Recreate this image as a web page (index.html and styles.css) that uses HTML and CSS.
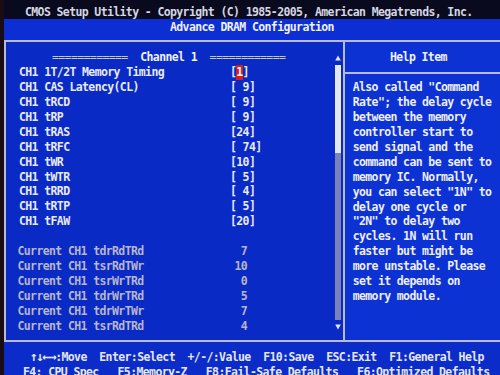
FILE: index.html
```html
<!DOCTYPE html>
<html>
<head>
<meta charset="utf-8">
<link rel="stylesheet" href="styles.css">
</head>
<body>
<div class="screen">
  <div class="titlebar">CMOS Setup Utility - Copyright (C) 1985-2005, American Megatrends, Inc.</div>
  <div class="subtitle">Advance DRAM Configuration</div>
  <div class="hline"></div>
  <div class="main">
    <div class="left">
      <div class="content">
        <div class="channel"><span class="eq">============</span>  Channel 1  <span class="eq">============</span></div>
        <div class="item"><span>CH1 1T/2T Memory Timing</span><span>[<span class="sel">1</span>]</span></div>
        <div class="item"><span>CH1 CAS Latency(CL)</span><span>[ 9]</span></div>
        <div class="item"><span>CH1 tRCD</span><span>[ 9]</span></div>
        <div class="item"><span>CH1 tRP</span><span>[ 9]</span></div>
        <div class="item"><span>CH1 tRAS</span><span>[24]</span></div>
        <div class="item"><span>CH1 tRFC</span><span>[ 74]</span></div>
        <div class="item"><span>CH1 tWR</span><span>[10]</span></div>
        <div class="item"><span>CH1 tWTR</span><span>[ 5]</span></div>
        <div class="item"><span>CH1 tRRD</span><span>[ 4]</span></div>
        <div class="item"><span>CH1 tRTP</span><span>[ 5]</span></div>
        <div class="item"><span>CH1 tFAW</span><span>[20]</span></div>
        <div class="spacer"></div>
        <div class="cur"><span>Current CH1 tdrRdTRd</span><span class="num">7</span></div>
        <div class="cur"><span>Current CH1 tsrRdTWr</span><span class="num">10</span></div>
        <div class="cur"><span>Current CH1 tsrWrTRd</span><span class="num">0</span></div>
        <div class="cur"><span>Current CH1 tdrWrTRd</span><span class="num">5</span></div>
        <div class="cur"><span>Current CH1 tdrWrTWr</span><span class="num">7</span></div>
        <div class="cur"><span>Current CH1 tsrRdTRd</span><span class="num">4</span></div>
      </div>
      <div class="sb">
        <div class="sb-up"><svg width="6" height="6" viewBox="0 0 6 6"><path d="M3 0.5L5.8 5.5H0.2Z" fill="#e6e8f2"/></svg></div>
        <div class="sb-track"><div class="sb-thumb"></div></div>
        <div class="sb-down"><svg width="6" height="6" viewBox="0 0 6 6"><path d="M0.2 0.5H5.8L3 5.5Z" fill="#e6e8f2"/></svg></div>
      </div>
    </div>
    <div class="right">
      <div class="help-head">Help Item</div>
      <div class="help-text">Also called "Command
Rate"; the delay cycle
between the memory
controller start to
send signal and the
command can be sent to
memory IC. Normally,
you can select "1N" to
delay one cycle or
"2N" to delay two
cycles. 1N will run
faster but might be
more unstable. Please
set it depends on
memory module.</div>
    </div>
  </div>
  <div class="hline"></div>
  <div class="footer">
    <div class="keys1"><span class="arrows">↑↓←→</span>:Move  Enter:Select  +/-/:Value  F10:Save  ESC:Exit  F1:General Help</div>
    <div class="keys2">F4: CPU Spec   F5:Memory-Z   F8:Fail-Safe Defaults   F6:Optimized Defaults</div>
  </div>
</div>
</body>
</html>
```

FILE: styles.css
```css
* {
  box-sizing: border-box;
  margin: 0;
  padding: 0;
}

html, body {
  width: 500px;
  height: 375px;
  overflow: hidden;
  background: #140a12;
}

.screen {
  width: 500px;
  height: 375px;
  border-left: 4px solid #1a0c14;
  background: #0b2ccc;
  font-family: "DejaVu Sans Mono", monospace;
  font-weight: bold;
  font-size: 11.5px;
  letter-spacing: -0.62px;
  line-height: 14.9px;
  color: #e8eaf6;
  overflow: hidden;
  display: flex;
  flex-direction: column;
}

.titlebar,
.subtitle,
.channel,
.item span,
.cur span,
.help-head,
.help-text,
.keys1,
.keys2 {
  white-space: pre;
}

.titlebar {
  height: 19px;
  flex: none;
  background: #0a0a1e;
  color: #d4d6e2;
  padding: 5.3px 0 0 21px;
}

.subtitle {
  height: 21px;
  flex: none;
  background: #0c2ed2;
  color: #eef0ff;
  padding: 0.9px 0 0 166px;
}

.hline {
  height: 2px;
  flex: none;
  background: #b9bccf;
}

.main {
  height: 298px;
  flex: none;
  display: flex;
}

.left {
  width: 339px;
  flex: none;
  border-left: 2px solid #b9bccf;
  background: #0a2ac6;
  display: flex;
}

.content {
  flex: 1;
  padding: 8.25px 0 0 13px;
}

.channel {
  padding-left: 33px;
  color: #f0f2ff;
}

.eq {
  color: #c4c8e2;
  font-weight: normal;
}

.item {
  display: grid;
  grid-template-columns: 211px auto;
}

.sel {
  display: inline-block;
  width: 6.3px;
  background: #d81c1c;
  color: #ffffff;
}

.spacer {
  height: 14.9px;
}

.cur {
  display: grid;
  grid-template-columns: 212.5px 17px;
  margin-left: -1.5px;
  color: #b8b6cc;
}

.num {
  text-align: right;
}

.sb {
  width: 6px;
  flex: none;
  margin-right: 2px;
  padding-top: 12px;
  display: flex;
  flex-direction: column;
}

.sb-up {
  height: 11px;
  padding-top: 1px;
}

.sb-up svg,
.sb-down svg {
  display: block;
}

.sb-track {
  height: 255px;
  background: #7a82bc;
}

.sb-thumb {
  height: 88px;
  background: #e4e6f0;
}

.sb-down {
  height: 12px;
  padding-top: 4px;
}

.right {
  flex: 1;
  border-left: 2px solid #b9bccf;
  background: #0d32d4;
}

.help-head {
  height: 32px;
  border-bottom: 2px solid #b9bccf;
  padding: 8.25px 0 0 45px;
  color: #eef0ff;
}

.help-text {
  padding: 6.25px 0 0 7.7px;
  color: #eceef8;
}

.footer {
  flex: 1;
  background: #0b2cc8;
  padding-top: 8px;
  color: #e4e6f4;
}

.keys1 {
  padding-left: 26px;
}

.arrows {
  font-size: 13px;
  letter-spacing: -1.53px;
  line-height: 10px;
}

.keys2 {
  padding-left: 19px;
}
```
